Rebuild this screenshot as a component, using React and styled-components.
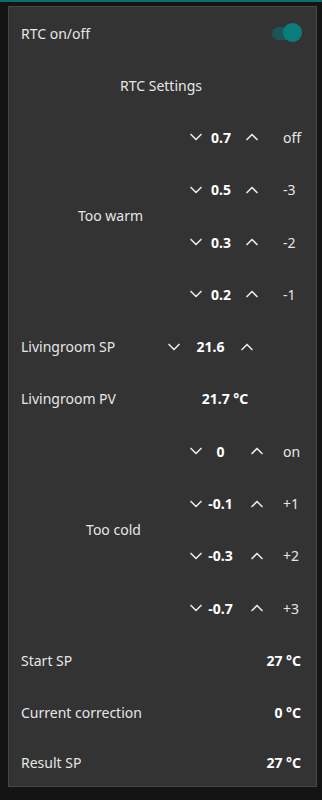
import React, {useState} from 'react';
import styled, {createGlobalStyle} from 'styled-components';
import {ChevronDown, ChevronUp} from 'lucide-react';

const GlobalStyle = createGlobalStyle`
    body {
        margin: 0;
        background: #141414;
        font-family: "Noto Sans", "Open Sans", sans-serif;
        font-size: 14px;
        color: #e6e6e6;
    }
`;

const TopLine = styled.div`
    height: 2px;
    background: #0b6d6e;
`;

const Card = styled.section`
    margin: 4px 5px 12px 8px;
    border: 1px solid #474747;
    background: #333333;
    padding: 0 15px 0 12px;
`;

const Row = styled.div`
    height: ${p => p.$height || 52.3}px;
    display: flex;
    align-items: center;
    justify-content: ${p => p.$center ? 'center' : 'space-between'};
`;

const Label = styled.span`
    width: ${p => p.$width ? p.$width + 'px' : 'auto'};
    flex-shrink: 0;
`;

const Value = styled.span`
    font-weight: 700;
    color: #ffffff;
    text-align: ${p => p.$align || 'right'};
    width: ${p => p.$width ? p.$width + 'px' : 'auto'};
`;

const Spacer = styled.span`
    flex: 1;
`;

const Switch = styled.button`
    position: relative;
    width: 32px;
    height: 20px;
    margin-right: -2px;
    border: none;
    padding: 0;
    background: transparent;
    cursor: pointer;

    &::before {
        content: '';
        position: absolute;
        left: 1px;
        right: 3px;
        top: 4px;
        height: 13px;
        border-radius: 7px;
        background: ${p => p.$on ? '#1d5556' : '#555'};
    }

    &::after {
        content: '';
        position: absolute;
        top: 0;
        left: ${p => p.$on ? '12px' : '0'};
        width: 19px;
        height: 19px;
        border-radius: 50%;
        background: ${p => p.$on ? '#0b7c7e' : '#aaa'};
    }
`;

const Group = styled.div`
    display: grid;
    grid-template-columns: 165px 97px 1fr;
    grid-auto-rows: 52.3px;
    align-items: center;
`;

const GroupLabel = styled.span`
    grid-column: 1;
    grid-row: 1 / span 4;
    text-align: center;
    padding-left: ${p => p.$pad}px;
`;

const Stepper = styled.div`
    display: flex;
    align-items: center;
`;

const StepButton = styled.button`
    display: flex;
    align-items: center;
    justify-content: center;
    width: 20px;
    height: 20px;
    padding: 0;
    border: none;
    background: transparent;
    color: #e6e6e6;
    cursor: pointer;
`;

const StepValue = styled.span`
    width: ${p => p.$width}px;
    padding-right: ${p => p.$gap || 0}px;
    text-align: center;
    font-weight: 700;
    color: #ffffff;
`;

const Tag = styled.span``;

function Step({value, width, gap}) {
    return (
        <Stepper>
            <StepButton><ChevronDown size={20} strokeWidth={2} /></StepButton>
            <StepValue $width={width} $gap={gap}>{value}</StepValue>
            <StepButton><ChevronUp size={20} strokeWidth={2} /></StepButton>
        </Stepper>
    );
}

const warm = [
    {value: '0.7', tag: 'off'},
    {value: '0.5', tag: '-3'},
    {value: '0.3', tag: '-2'},
    {value: '0.2', tag: '-1'},
];

const cold = [
    {value: '0', tag: 'on'},
    {value: '-0.1', tag: '+1'},
    {value: '-0.3', tag: '+2'},
    {value: '-0.7', tag: '+3'},
];

function StepGroup({label, items, pad, width, gap}) {
    return (
        <Group>
            <GroupLabel $pad={pad}>{label}</GroupLabel>
            {items.map(it => (
                <React.Fragment key={it.tag}>
                    <Step value={it.value} width={width} gap={gap} />
                    <Tag>{it.tag}</Tag>
                </React.Fragment>
            ))}
        </Group>
    );
}

export default function App() {
    const [on, setOn] = useState(true);

    return (
        <>
            <GlobalStyle />
            <TopLine />
            <Card>
                <Row $height={52}>
                    <Label>RTC on/off</Label>
                    <Switch $on={on} onClick={() => setOn(!on)} aria-label="RTC on/off" />
                </Row>
                <Row $center>
                    <Label>RTC Settings</Label>
                </Row>
                <StepGroup label="Too warm" items={warm} pad={14} width={30} gap={6} />
                <Row>
                    <Label $width={143}>Livingroom SP</Label>
                    <Stepper>
                        <StepButton><ChevronDown size={20} strokeWidth={2} /></StepButton>
                        <StepValue $width={53}>21.6</StepValue>
                        <StepButton><ChevronUp size={20} strokeWidth={2} /></StepButton>
                    </Stepper>
                    <Spacer />
                </Row>
                <Row>
                    <Label $width={143}>Livingroom PV</Label>
                    <Value $align="center" $width={122}>21.7 °C</Value>
                    <Spacer />
                </Row>
                <StepGroup label="Too cold" items={cold} pad={20} width={29} gap={12} />
                <Row>
                    <Label>Start SP</Label>
                    <Value>27 °C</Value>
                </Row>
                <Row>
                    <Label>Current correction</Label>
                    <Value>0 °C</Value>
                </Row>
                <Row $height={47}>
                    <Label>Result SP</Label>
                    <Value>27 °C</Value>
                </Row>
            </Card>
        </>
    );
}
